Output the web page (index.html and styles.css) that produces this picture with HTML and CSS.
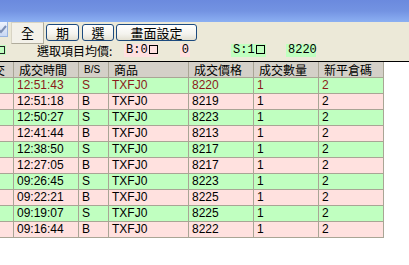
FILE: index.html
```html
<!DOCTYPE html>
<html>
<head>
<meta charset="utf-8">
<link rel="stylesheet" href="styles.css">
</head>
<body>
<div class="titlebar"></div>
<div class="toolbar">
  <div class="tools">
    <span class="check"><svg width="8" height="15" viewBox="0 0 8 15"><path d="M-2 7 L1 10 L6 4" fill="none" stroke="#7d8fb4" stroke-width="2"/></svg></span>
    <span class="tab">全</span>
    <button class="btn b1">期</button>
    <button class="btn b2">選</button>
    <button class="btn b3">畫面設定</button>
  </div>
  <div class="stats">
    <span class="gbox"><span class="box"></span></span>
    <span class="label">選取項目均價:</span>
    <span class="val pink vb">B:0<span class="box"></span></span>
    <span class="val pink v0">0</span>
    <span class="val green vs">S:1<span class="box"></span></span>
    <span class="val green vp">8220</span>
  </div>
</div>
<table class="grid">
  <colgroup>
    <col class="c0"><col class="c1"><col class="c2"><col class="c3"><col class="c4"><col class="c5"><col class="c6">
  </colgroup>
  <thead>
    <tr><th><span class="cut">交</span></th><th>成交時間</th><th class="bs">B/S</th><th>商品</th><th>成交價格</th><th>成交數量</th><th>新平倉碼</th></tr>
  </thead>
  <tbody>
    <tr class="s hl"><td></td><td>12:51:43</td><td>S</td><td>TXFJ0</td><td>8220</td><td>1</td><td>2</td></tr>
    <tr class="b"><td></td><td>12:51:18</td><td>B</td><td>TXFJ0</td><td>8219</td><td>1</td><td>2</td></tr>
    <tr class="s"><td></td><td>12:50:27</td><td>S</td><td>TXFJ0</td><td>8223</td><td>1</td><td>2</td></tr>
    <tr class="b"><td></td><td>12:41:44</td><td>B</td><td>TXFJ0</td><td>8213</td><td>1</td><td>2</td></tr>
    <tr class="s"><td></td><td>12:38:50</td><td>S</td><td>TXFJ0</td><td>8217</td><td>1</td><td>2</td></tr>
    <tr class="b"><td></td><td>12:27:05</td><td>B</td><td>TXFJ0</td><td>8217</td><td>1</td><td>2</td></tr>
    <tr class="s"><td></td><td>09:26:45</td><td>S</td><td>TXFJ0</td><td>8223</td><td>1</td><td>2</td></tr>
    <tr class="b"><td></td><td>09:22:21</td><td>B</td><td>TXFJ0</td><td>8225</td><td>1</td><td>2</td></tr>
    <tr class="s"><td></td><td>09:19:07</td><td>S</td><td>TXFJ0</td><td>8225</td><td>1</td><td>2</td></tr>
    <tr class="b"><td></td><td>09:16:44</td><td>B</td><td>TXFJ0</td><td>8222</td><td>1</td><td>2</td></tr>
  </tbody>
</table>
</body>
</html>
```
FILE: styles.css
```css
html, body {
  margin: 0;
  padding: 0;
}
body {
  width: 409px;
  height: 265px;
  overflow: hidden;
  background: #ffffff;
  font-family: "Liberation Sans", Arial, "Noto Sans CJK TC", sans-serif;
  font-size: 12px;
  color: #000;
}
.titlebar {
  height: 22px;
  background: linear-gradient(#6b8ade 0%, #7393e2 50%, #82a4ec 80%, #8cb0f2 100%);
}
.toolbar {
  height: 39px;
  background: #ece9d8;
  border-bottom: 1px solid #000;
}
.tools {
  display: flex;
  align-items: flex-start;
  height: 22px;
}
.check {
  width: 8px;
  height: 15px;
  background: linear-gradient(#eef3fd, #c9d8f3);
  border-right: 1px solid #98b4e0;
  border-bottom: 1px solid #98b4e0;
  box-sizing: border-box;
  display: block;
}
.check svg { display: block; }
.tab {
  margin-left: 3px;
  width: 33px;
  height: 22px;
  box-sizing: border-box;
  background: #f3f1e9;
  border: 1px solid #d8d4c4;
  border-right-color: #b0ac9c;
  border-bottom-color: #b0ac9c;
  font-family: "Noto Sans CJK TC", sans-serif;
  font-size: 13px;
  line-height: 19px;
  text-align: center;
}
.btn {
  margin: 2px 0 0 0;
  height: 17px;
  padding: 0;
  box-sizing: border-box;
  border: 1px solid #1c4a7e;
  border-radius: 3px;
  background: linear-gradient(#ffffff, #f4f3ee 60%, #e3e0d2);
  font-family: "Noto Sans CJK TC", sans-serif;
  font-size: 13px;
  line-height: 14px;
  color: #000;
  text-align: center;
}
.b1 { margin-left: 2px; width: 33px; }
.b2 { margin-left: 3px; width: 32px; }
.b3 { margin-left: 2px; width: 81px; }
.stats {
  display: flex;
  align-items: center;
  height: 13px;
  font-family: "Noto Sans CJK TC", sans-serif;
  font-size: 12px;
  line-height: 13px;
}
.box {
  display: inline-block;
  width: 9px;
  height: 9px;
  box-sizing: border-box;
  border: 1px solid #000;
  margin-left: 1px;
  vertical-align: -1px;
}
.gbox {
  width: 6px;
  height: 10px;
  margin-top: -2px;
  background: #c0ffc0;
  overflow: hidden;
  display: flex;
  align-items: center;
}
.gbox .box {
  flex: none;
  margin-left: -4px;
  width: 9px;
  height: 8px;
  border-color: #222;
}
.label {
  margin-left: 31px;
  width: 80px;
  white-space: nowrap;
}
.val {
  height: 13px;
  box-sizing: border-box;
  font-family: "Liberation Mono", "Noto Sans CJK TC", monospace;
  font-size: 12px;
  line-height: 13px;
  white-space: nowrap;
  padding-left: 2px;
}
.pink { background: #ffe0e0; }
.green { background: #c0ffc0; }
.vb { margin-left: 7px; width: 34px; }
.v0 { margin-left: 22px; width: 10px; text-align: right; padding: 0 1px 0 0; }
.vs { margin-left: 41px; width: 35px; }
.vp { margin-left: 20px; width: 30px; }

.grid {
  border-collapse: collapse;
  table-layout: fixed;
  width: 384px;
  margin-left: -1px;
}
.c0 { width: 14px; }
.c1 { width: 65px; }
.c2 { width: 30px; }
.c3 { width: 80px; }
.c4 { width: 65px; }
.c5 { width: 65px; }
.c6 { width: 65px; }
.grid th, .grid td {
  border: 1px solid #a9a595;
  height: 15px;
  padding: 0 0 0 3px;
  line-height: 15px;
  text-align: left;
  white-space: nowrap;
  overflow: hidden;
}
.grid th {
  border-top: 0;
  background: #d4d0c8;
  font-family: "Noto Sans CJK TC", sans-serif;
  font-weight: normal;
  font-size: 12px;
  padding-left: 5px;
}
.grid th.bs {
  font-family: "Liberation Sans", sans-serif;
  font-size: 10px;
}
.grid th .cut {
  display: inline-block;
  margin-left: -12px;
}
.grid td {
  font-size: 12px;
}
.grid tr.s td { background: #c0ffc0; }
.grid tr.b td { background: #ffe1df; }
.grid tr.hl td { color: #8b1a1a; }
```
